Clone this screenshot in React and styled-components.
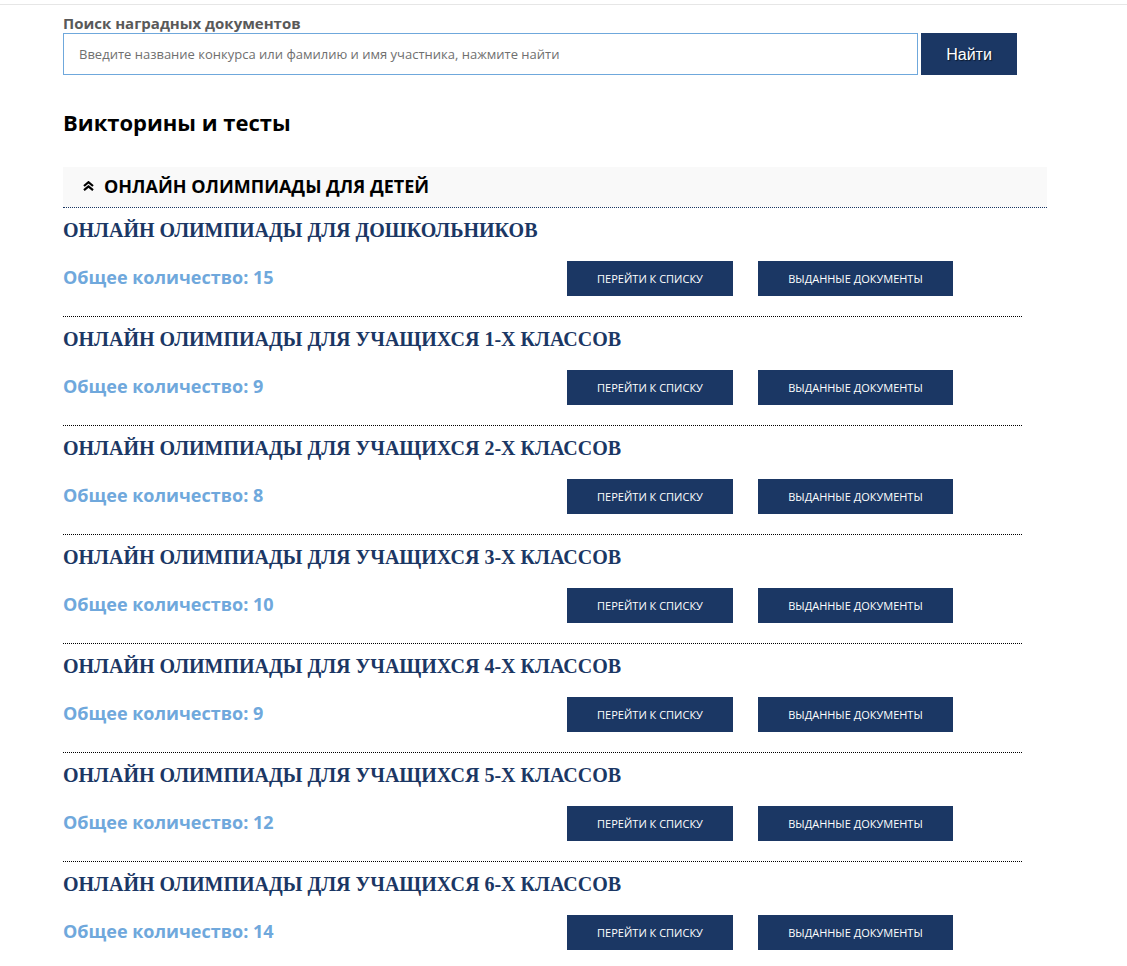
import React from "react";
import styled, { createGlobalStyle } from "styled-components";

const Global = createGlobalStyle`
  html, body { margin: 0; padding: 0; background: #fff; }
  body { font-family: "Open Sans", "Liberation Sans", sans-serif; }
  * { box-sizing: border-box; }
`;

const Page = styled.div`
  margin-top: 4px;
  border-top: 1px solid #e6e6e6;
  padding: 8px 0 40px 63px;
`;

const SearchLabel = styled.div`
  font-size: 15px;
  line-height: 20px;
  font-weight: 700;
  color: #595959;
`;

const SearchRow = styled.form`
  display: flex;
  align-items: stretch;
  gap: 3px;
  width: 954px;
`;

const SearchInput = styled.input`
  flex: 1;
  height: 42px;
  border: 1px solid #6fa8dc;
  padding: 0 15px;
  font-family: "Open Sans", sans-serif;
  font-size: 13px;
  color: #333;
  outline: none;
  &::placeholder { color: #6f6f6f; }
`;

const SearchButton = styled.button`
  width: 96px;
  height: 42px;
  border: none;
  padding: 2px 0 0;
  background: #1b3764;
  color: #fff;
  font-family: "Liberation Sans", Arial, sans-serif;
  font-size: 16px;
  text-shadow: 1px 1px 1px rgba(0,0,0,0.6);
  cursor: pointer;
`;

const Heading = styled.h2`
  margin: 32px 0 30px;
  font-size: 22px;
  line-height: 30px;
  font-weight: 700;
  color: #000;
`;

const AccordionHeader = styled.div`
  width: 984px;
  height: 41px;
  display: flex;
  align-items: center;
  gap: 10px;
  padding: 0 0 2px 20px;
  background: #f9f9f9;
  border-bottom: 1px dotted #1b3764;
  font-size: 18px;
  font-weight: 700;
  color: #000;
`;

const Item = styled.div`
  width: 959px;
  padding: 11px 0 20px;
  border-bottom: ${p => (p.$last ? "none" : "1px dotted #000")};
`;

const ItemTitle = styled.h3`
  margin: 0 0 20px;
  font-family: "Liberation Serif", "Times New Roman", serif;
  font-size: 20px;
  line-height: 22px;
  font-weight: 700;
  color: #1b3764;
`;

const ItemRow = styled.div`
  display: grid;
  grid-template-columns: 479px 166px 195px;
  column-gap: 25px;
  align-items: center;
`;

const Count = styled.div`
  font-size: 18px;
  line-height: 24px;
  font-weight: 700;
  color: #6fa8dc;
  margin-top: -4px;
`;

const ActionButton = styled.button`
  height: 35px;
  border: none;
  background: #1b3764;
  color: #fff;
  font-family: "Open Sans", sans-serif;
  font-size: 11px;
  text-transform: uppercase;
  cursor: pointer;
  padding: 0;
`;

const ChevronIcon = () => (
  <svg width="11" height="10" viewBox="0 0 11 10" fill="none">
    <path d="M1 5 L5.5 1.2 L10 5" stroke="#000" strokeWidth="2.2" />
    <path d="M1 9.2 L5.5 5.4 L10 9.2" stroke="#000" strokeWidth="2.2" />
  </svg>
);

const items = [
  ["ОНЛАЙН ОЛИМПИАДЫ ДЛЯ ДОШКОЛЬНИКОВ", 15],
  ["ОНЛАЙН ОЛИМПИАДЫ ДЛЯ УЧАЩИХСЯ 1-Х КЛАССОВ", 9],
  ["ОНЛАЙН ОЛИМПИАДЫ ДЛЯ УЧАЩИХСЯ 2-Х КЛАССОВ", 8],
  ["ОНЛАЙН ОЛИМПИАДЫ ДЛЯ УЧАЩИХСЯ 3-Х КЛАССОВ", 10],
  ["ОНЛАЙН ОЛИМПИАДЫ ДЛЯ УЧАЩИХСЯ 4-Х КЛАССОВ", 9],
  ["ОНЛАЙН ОЛИМПИАДЫ ДЛЯ УЧАЩИХСЯ 5-Х КЛАССОВ", 12],
  ["ОНЛАЙН ОЛИМПИАДЫ ДЛЯ УЧАЩИХСЯ 6-Х КЛАССОВ", 14],
];

export default function App() {
  return (
    <>
      <Global />
      <Page>
        <SearchLabel>Поиск наградных документов</SearchLabel>
        <SearchRow onSubmit={e => e.preventDefault()}>
          <SearchInput placeholder="Введите название конкурса или фамилию и имя участника, нажмите найти" />
          <SearchButton type="submit">Найти</SearchButton>
        </SearchRow>
        <Heading>Викторины и тесты</Heading>
        <AccordionHeader>
          <ChevronIcon />
          ОНЛАЙН ОЛИМПИАДЫ ДЛЯ ДЕТЕЙ
        </AccordionHeader>
        {items.map(([title, count], i) => (
          <Item key={title} $last={i === items.length - 1}>
            <ItemTitle>{title}</ItemTitle>
            <ItemRow>
              <Count>Общее количество: {count}</Count>
              <ActionButton>Перейти к списку</ActionButton>
              <ActionButton>Выданные документы</ActionButton>
            </ItemRow>
          </Item>
        ))}
      </Page>
    </>
  );
}
